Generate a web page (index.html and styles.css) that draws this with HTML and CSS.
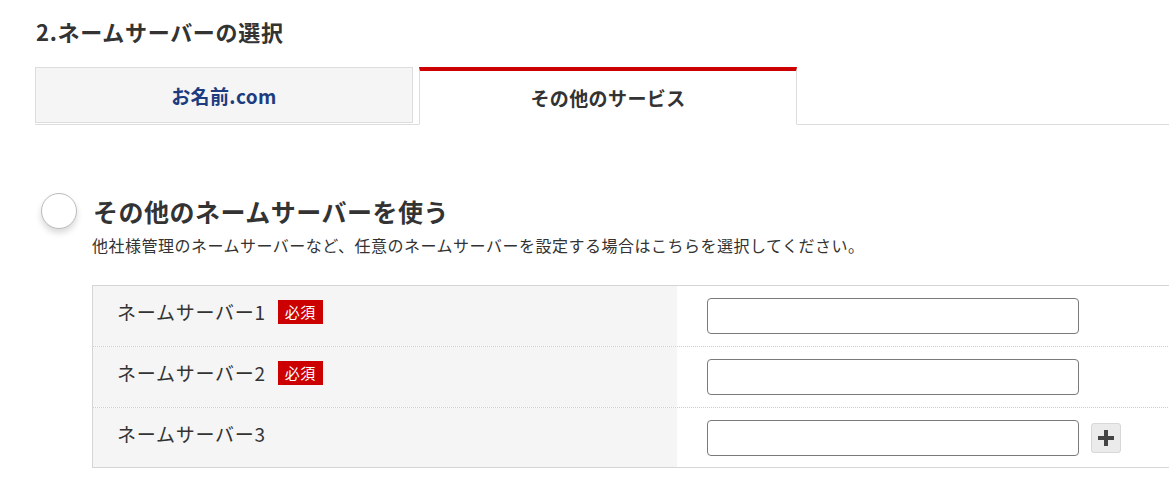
FILE: index.html
```html
<!DOCTYPE html>
<html lang="ja">
<head>
<meta charset="utf-8">
<title>ネームサーバーの選択</title>
<link rel="stylesheet" href="styles.css">
</head>
<body>
<div class="page">
  <h2 class="section-title">2.ネームサーバーの選択</h2>

  <div class="tabs">
    <div class="tab">お名前.com</div>
    <div class="tab active">その他のサービス</div>
  </div>

  <div class="option">
    <div class="option-head">
      <span class="radio"></span>
      <span class="option-title">その他のネームサーバーを使う</span>
    </div>
    <p class="option-desc">他社様管理のネームサーバーなど、任意のネームサーバーを設定する場合はこちらを選択してください。</p>
  </div>

  <div class="ns-table">
    <div class="ns-row">
      <div class="ns-label">ネームサーバー1<span class="required">必須</span></div>
      <div class="ns-field"><input type="text" class="ns-input"></div>
    </div>
    <div class="ns-row">
      <div class="ns-label">ネームサーバー2<span class="required">必須</span></div>
      <div class="ns-field"><input type="text" class="ns-input"></div>
    </div>
    <div class="ns-row">
      <div class="ns-label">ネームサーバー3</div>
      <div class="ns-field">
        <input type="text" class="ns-input">
        <button type="button" class="add-btn" aria-label="追加">
          <svg width="18" height="18" viewBox="0 0 18 18"><path d="M9 1v16M1 9h16" stroke="#444" stroke-width="4" fill="none"/></svg>
        </button>
      </div>
    </div>
  </div>
</div>
</body>
</html>
```

FILE: styles.css
```css
body {
  margin: 0;
  background-color: #fff;
  color: #333;
  font-family: "Noto Sans CJK JP", "Noto Sans", sans-serif;
  overflow: hidden;
}
.page { padding-left: 35px; }

.section-title {
  margin: 0; padding: 16px 0 0 1px;
  font-size: 22px; line-height: 30px; font-weight: bold;
  letter-spacing: 0.7px;
}

/* tab switch */
.tabs {
  display: flex; gap: 6px;
  margin-top: 21px;
  border-bottom: 1px solid #ddd;
}
.tab {
  width: 378px; height: 56px; box-sizing: border-box;
  margin-bottom: -1px;
  display: flex; align-items: center; justify-content: center;
  font-size: 19px; font-weight: bold; letter-spacing: 0.4px;
  background-color: #f5f5f5; color: #1d3c7f;
  border: 1px solid #ddd;
}
.tab.active {
  height: 58px;
  background-color: #fff; color: #333;
  border-top: 4px solid #cc0000;
  border-bottom: 1px solid #fff;
}

/* radio option */
.option { margin-top: 68px; padding-left: 6px; }
.option-head { display: flex; align-items: center; }
.radio {
  width: 36px; height: 36px; box-sizing: border-box;
  border: 1px solid #bbb; border-radius: 50%;
  background-color: #fff;
  box-shadow: 0 4px 6px rgba(0, 0, 0, 0.15);
}
.option-title {
  margin-left: 16px;
  font-size: 25px; line-height: 36px; font-weight: bold;
  letter-spacing: 0.5px;
}
.option-desc {
  margin: 4px 0 0 51px;
  font-size: 16px; line-height: 24px;
  letter-spacing: 0.5px;
}

/* name server rows */
.ns-table {
  margin: 28px -30px 0 57px;
  border: 1px solid #d5d5d5;
}
.ns-row { display: flex; border-bottom: 1px dotted #ccc; }
.ns-row:last-child { border-bottom: none; }
.ns-label {
  width: 584px; box-sizing: border-box;
  padding: 13px 0 0 24px;
  background-color: #f5f5f5;
  display: flex; align-items: flex-start;
  font-size: 19px; line-height: 26px;
  letter-spacing: 0.75px;
}
.required {
  margin: 1px 0 0 12px; padding: 0 7px;
  height: 24px; line-height: 24px;
  background-color: #cc0000; color: #fff;
  font-size: 15px; letter-spacing: 0.5px;
}
.ns-field {
  flex: 1;
  display: flex; align-items: center;
  padding: 12px 0 12px 30px;
}
.ns-input {
  width: 372px; height: 36px; box-sizing: border-box;
  border: 1px solid #7a7a7a; border-radius: 4px;
  margin: 0;
}
.ns-row:last-child .ns-field { padding-bottom: 11px; }
.add-btn {
  width: 30px; height: 30px; box-sizing: border-box;
  margin-left: 12px; padding: 0;
  display: flex; align-items: center; justify-content: center;
  background-color: #ebebeb;
  border: 1px solid #d8d8d8; border-radius: 3px;
}
```
